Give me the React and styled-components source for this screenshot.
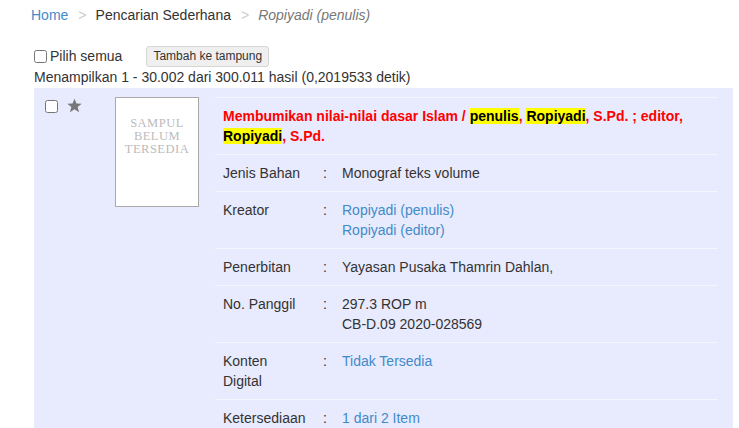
import React from 'react';
import styled, { createGlobalStyle } from 'styled-components';

const GlobalStyle = createGlobalStyle`
  * { box-sizing: border-box; }
  body {
    margin: 0;
    font-family: "Liberation Sans", Arial, sans-serif;
    font-size: 14px;
    line-height: 20px;
    color: #333;
    background: #fff;
    overflow: hidden;
  }
`;

const Page = styled.div`
  padding: 5px 6px 0 34px;
`;

const Breadcrumb = styled.div`
  display: flex;
  align-items: center;
  margin-left: -3px;
  height: 20px;
`;
const Crumb = styled.span`
  color: ${(p) => (p.link ? '#428bca' : p.active ? '#777' : '#333')};
  font-style: ${(p) => (p.active ? 'italic' : 'normal')};
`;
const Sep = styled.span`
  color: #ccc;
  margin: 0 9px 0 10px;
`;

const Toolbar = styled.div`
  display: flex;
  align-items: center;
  margin-top: 20px;
  height: 22px;
`;
const CheckLabel = styled.label`
  display: flex;
  align-items: center;
  gap: 3px;
  input { margin: 0; width: 13px; height: 13px; }
`;
const Button = styled.button`
  margin-left: 24px;
  height: 21px;
  padding: 0 6px;
  font-family: "Liberation Sans", Arial, sans-serif;
  font-size: 12px;
  color: #333;
  background: #efefef;
  border: 1px solid #d6d6d6;
  border-radius: 3px;
`;

const Summary = styled.div`
  height: 21px;
  line-height: 20px;
`;

const Panel = styled.div`
  display: flex;
  background: #e8eafd;
  padding: 9px 15px 0 0;
  min-height: 400px;
`;
const Actions = styled.div`
  width: 81px;
  display: flex;
  align-items: flex-start;
  gap: 9px;
  padding: 3px 0 0 11px;
  input { margin: 0; width: 13px; height: 13px; }
`;
const Cover = styled.div`
  width: 84px;
  height: 110px;
  flex: none;
  background: #fff;
  border: 1px solid #aaa;
  padding-top: 19px;
  text-align: center;
  font-family: "Liberation Serif", "Times New Roman", serif;
  font-size: 12.5px;
  line-height: 13px;
  letter-spacing: 0.5px;
  color: #bbb;
`;
const Details = styled.div`
  flex: 1;
  margin-left: 16px;
`;
const Title = styled.div`
  border-top: 1px solid #f4f5fd;
  padding: 8px;
  font-weight: bold;
  color: #f00;
`;
const Mark = styled.span`
  background: #ff0;
  color: #000;
`;
const Row = styled.div`
  display: grid;
  grid-template-columns: 100px 19px 1fr;
  border-top: 1px solid #f4f5fd;
  & > div { padding: 8px; }
`;
const Value = styled.div`
  color: ${(p) => (p.link ? '#428bca' : '#333')};
`;

const Star = () => (
  <svg width="15" height="15" viewBox="0 0 24 24" style={{ marginTop: -2 }}>
    <polygon
      fill="#777"
      points="12,1 15.1,8.6 23.5,9 17,14.3 19.3,22.6 12,18 4.7,22.6 7,14.3 0.5,9 8.9,8.6"
    />
  </svg>
);

const rows = [
  { label: 'Jenis Bahan', values: ['Monograf teks volume'] },
  { label: 'Kreator', values: ['Ropiyadi (penulis)', 'Ropiyadi (editor)'], link: true },
  { label: 'Penerbitan', values: ['Yayasan Pusaka Thamrin Dahlan,'] },
  { label: 'No. Panggil', values: ['297.3 ROP m', 'CB-D.09 2020-028569'] },
  { label: 'Konten Digital', values: ['Tidak Tersedia'], link: true },
  { label: 'Ketersediaan', values: ['1 dari 2 Item'], link: true },
];

export default function App() {
  return (
    <>
      <GlobalStyle />
      <Page>
        <Breadcrumb>
          <Crumb link>Home</Crumb>
          <Sep>&gt;</Sep>
          <Crumb>Pencarian Sederhana</Crumb>
          <Sep>&gt;</Sep>
          <Crumb active>Ropiyadi (penulis)</Crumb>
        </Breadcrumb>
        <Toolbar>
          <CheckLabel>
            <input type="checkbox" />
            Pilih semua
          </CheckLabel>
          <Button>Tambah ke tampung</Button>
        </Toolbar>
        <Summary>Menampilkan 1 - 30.002 dari 300.011 hasil (0,2019533 detik)</Summary>
        <Panel>
          <Actions>
            <input type="checkbox" />
            <Star />
          </Actions>
          <Cover>
            SAMPUL
            <br />
            BELUM
            <br />
            TERSEDIA
          </Cover>
          <Details>
            <Title>
              Membumikan nilai-nilai dasar Islam / <Mark>penulis</Mark>, <Mark>Ropiyadi</Mark>, S.Pd. ; editor,{' '}
              <Mark>Ropiyadi</Mark>, S.Pd.
            </Title>
            {rows.map((r) => (
              <Row key={r.label}>
                <div>{r.label}</div>
                <div>:</div>
                <Value link={r.link}>
                  {r.values.map((v) => (
                    <div key={v}>{v}</div>
                  ))}
                </Value>
              </Row>
            ))}
          </Details>
        </Panel>
      </Page>
    </>
  );
}
